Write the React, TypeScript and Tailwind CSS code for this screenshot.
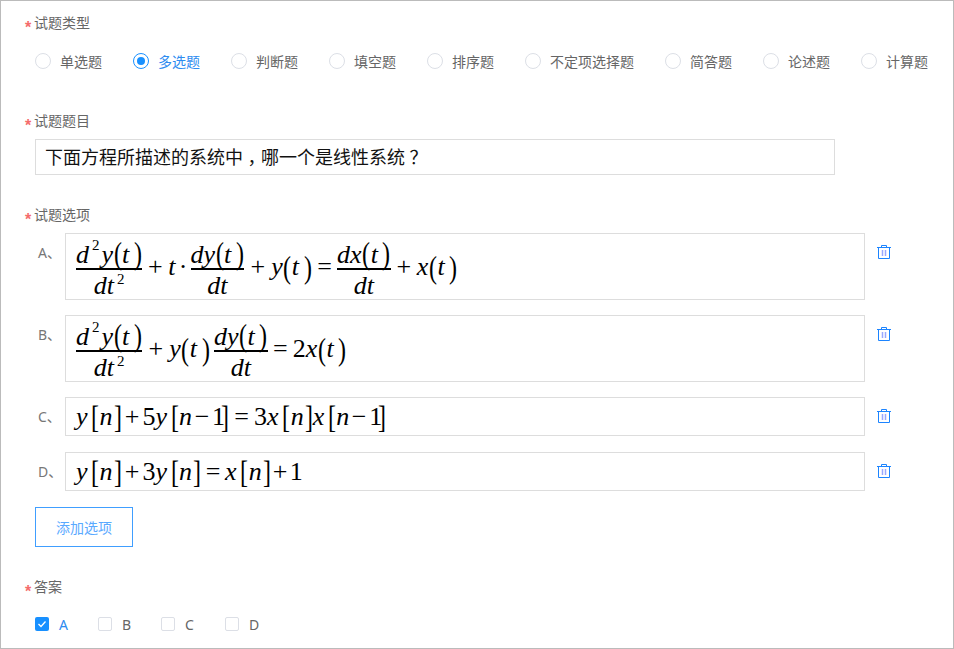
import type { ReactNode } from "react";

const types = ["单选题", "多选题", "判断题", "填空题", "排序题", "不定项选择题", "简答题", "论述题", "计算题"];

function Label({ children }: { children: ReactNode }) {
  return (
    <div className="flex h-5 items-center text-[14px] leading-5 text-[#666]">
      <span className="w-[9px] translate-y-[5px] font-['Liberation_Sans'] text-[16px] font-bold text-[#f56c6c]">*</span>
      <span>{children}</span>
    </div>
  );
}

function I({ children, className = "" }: { children: ReactNode; className?: string }) {
  return <span className={"italic " + className}>{children}</span>;
}

function Fence({ children }: { children: string }) {
  return (
    <span className="inline-flex w-[9px] justify-center">
      <span className="inline-block scale-x-[0.8] scale-y-[1.08] text-[30px] font-light leading-none">{children}</span>
    </span>
  );
}

function T() {
  return (
    <>
      <Fence>(</Fence>
      <I className="mr-[4px]">t</I>
      <Fence>)</Fence>
    </>
  );
}

function Frac({ top, bottom }: { top: ReactNode; bottom: ReactNode }) {
  return (
    <span className="inline-flex flex-col items-stretch">
      <span className="flex h-[34px] items-end justify-center whitespace-nowrap">{top}</span>
      <span className="h-[2px] bg-black" />
      <span className="flex h-[30px] items-center justify-center whitespace-nowrap pt-[2px]">{bottom}</span>
    </span>
  );
}

function Op({ children, w }: { children?: ReactNode; w: number }) {
  return (
    <span className="inline-flex justify-center" style={{ width: w }}>
      {children}
    </span>
  );
}

// half-width punctuation glyph centred in a full-width cell
function Punct({ children }: { children: string }) {
  return (
    <span className="inline-flex w-[18px] justify-center [font-feature-settings:'halt']">{children}</span>
  );
}

const D2Y = (
  <Frac
    top={
      <>
        <I>d</I>
        <span className="mb-[15px] ml-[3px] mr-[2px] text-[15px] leading-none">2</span>
        <I>y</I>
        <T />
      </>
    }
    bottom={
      <>
        <I>dt</I>
        <span className="mb-[12px] ml-[3px] text-[15px] leading-none">2</span>
      </>
    }
  />
);

const DYDT = (
  <Frac
    top={
      <>
        <I>dy</I>
        <T />
      </>
    }
    bottom={<I>dt</I>}
  />
);

const Yt = (
  <>
    <I>y</I>
    <T />
  </>
);

const Xt = (
  <>
    <I>x</I>
    <T />
  </>
);

function B({ children }: { children: ReactNode }) {
  return (
    <>
      <span className="ml-[3px] inline-flex w-[9px] justify-center">
        <span className="inline-block scale-x-[0.8] scale-y-[1.08] text-[30px] font-light leading-none">[</span>
      </span>
      {children}
      <span className="ml-[1px] inline-flex w-[8px] justify-center">
        <span className="inline-block scale-x-[0.8] scale-y-[1.08] text-[30px] font-light leading-none">]</span>
      </span>
    </>
  );
}

const NMinus1 = (
  <>
    <I>n</I>
    <Op w={20}>−</Op>
    <span className="-mr-[5px]">1</span>
  </>
);

const formulas: { key: string; tall: boolean; body: ReactNode }[] = [
  {
    key: "A",
    tall: true,
    body: (
      <>
        {D2Y}
        <Op w={26}>+</Op>
        <I>t</I>
        <Op w={15}>·</Op>
        {DYDT}
        <Op w={27}>+</Op>
        {Yt}
        <Op w={25}>=</Op>
        <Frac
          top={
            <>
              <I>dx</I>
              <T />
            </>
          }
          bottom={<I>dt</I>}
        />
        <Op w={26}>+</Op>
        {Xt}
      </>
    ),
  },
  {
    key: "B",
    tall: true,
    body: (
      <>
        {D2Y}
        <Op w={27}>+</Op>
        {Yt}
        <span className="w-[4px]" />
        {DYDT}
        <Op w={25}>=</Op>
        <span>2</span>
        {Xt}
      </>
    ),
  },
  {
    key: "C",
    tall: false,
    body: (
      <>
        <I>y</I>
        <B>
          <I>n</I>
        </B>
        <Op w={21}>+</Op>
        <span>5</span>
        <I>y</I>
        <B>{NMinus1}</B>
        <Op w={25}>=</Op>
        <span>3</span>
        <I>x</I>
        <B>
          <I>n</I>
        </B>
        <I>x</I>
        <B>{NMinus1}</B>
      </>
    ),
  },
  {
    key: "D",
    tall: false,
    body: (
      <>
        <I>y</I>
        <B>
          <I>n</I>
        </B>
        <Op w={21}>+</Op>
        <span>3</span>
        <I>y</I>
        <B>
          <I>n</I>
        </B>
        <Op w={24}>=</Op>
        <I>x</I>
        <B>
          <I>n</I>
        </B>
        <Op w={19}>+</Op>
        <span>1</span>
      </>
    ),
  },
];

function Trash() {
  return (
    <svg width="14" height="14" viewBox="0 0 14 14" fill="none" className="ml-[12px] mt-[12px] shrink-0">
      <path d="M0 2.5h14M4.5 2.5v-2h5v2M1.5 2.5v11h11v-11" stroke="#1c84ff" strokeWidth="1" />
      <path d="M5.5 5v6M8.5 5v6" stroke="#9aa8ff" strokeWidth="1.5" />
    </svg>
  );
}

export default function App() {
  return (
    <div className="box-border h-[649px] w-[954px] overflow-hidden border border-[#bbb] bg-white pl-[24px] pt-[12px] font-['Noto_Sans','Noto_Sans_CJK_SC',sans-serif]">
      <Label>试题类型</Label>

      <div className="ml-[10px] mt-[17px] flex h-[22px] items-center gap-[31px] text-[14px] text-[#666]">
        {types.map((t, i) => (
          <label key={t} className={"flex items-center gap-[9px] " + (i === 1 ? "text-[#2d8cf0]" : "")}>
            {i === 1 ? (
              <span className="flex h-4 w-4 items-center justify-center rounded-full border border-[#1890ff]">
                <span className="h-2 w-2 rounded-full bg-[#1890ff]" />
              </span>
            ) : (
              <span className="h-4 w-4 rounded-full border border-[#dcdfe6]" />
            )}
            {t}
          </label>
        ))}
      </div>

      <div className="mt-[39px]">
        <Label>试题题目</Label>
      </div>
      <div className="ml-[10px] mt-[8px] flex h-[36px] w-[800px] items-center border border-[#ddd] pl-[9px] text-[18px] text-[#111]">
        <span>下面方程所描述的系统中</span>
        <Punct>，</Punct>
        <span>哪一个是线性系统</span>
        <Punct>？</Punct>
      </div>

      <div className="mt-[30px]">
        <Label>试题选项</Label>
      </div>

      <div className="ml-[13px] mt-[8px] flex flex-col">
        {formulas.map((f, i) => (
          <div key={f.key} className={"flex items-start " + (i === 0 ? "" : i === 3 ? "mt-[16px]" : "mt-[15px]")}>
            <span className="mt-[10px] w-[27px] text-[14px] leading-5 text-[#777]">{f.key}、</span>
            <div
              className={
                "flex w-[800px] items-center border border-[#ddd] pl-[10px] font-['Liberation_Serif'] text-[26px] leading-none text-black " +
                (f.tall ? "h-[67px]" : "h-[39px]")
              }
            >
              {f.body}
            </div>
            <Trash />
          </div>
        ))}
      </div>

      <button className="ml-[10px] mt-[16px] block h-[40px] w-[98px] border border-[#409eff] text-[14px] text-[#5aa9ff]">
        添加选项
      </button>

      <div className="mt-[30px]">
        <Label>答案</Label>
      </div>

      <div className="ml-[10px] mt-[17px] flex h-[20px] items-center text-[14px] text-[#666]">
        <span className="flex w-[63px] items-center">
          <span className="flex h-[14px] w-[14px] items-center justify-center rounded-[2px] bg-[#1890ff]">
            <svg width="10" height="10" viewBox="0 0 10 10" fill="none">
              <path d="M1.5 5l2.5 2.5 4.5-5" stroke="#fff" strokeWidth="1.3" />
            </svg>
          </span>
          <span className="ml-[10px] text-[#2d8cf0]">A</span>
        </span>
        <span className="flex w-[63px] items-center">
          <span className="h-[14px] w-[14px] rounded-[2px] border border-[#dcdfe6]" />
          <span className="ml-[10px]">B</span>
        </span>
        <span className="flex w-[64px] items-center">
          <span className="h-[14px] w-[14px] rounded-[2px] border border-[#dcdfe6]" />
          <span className="ml-[10px]">C</span>
        </span>
        <span className="flex items-center">
          <span className="h-[14px] w-[14px] rounded-[2px] border border-[#dcdfe6]" />
          <span className="ml-[10px]">D</span>
        </span>
      </div>
    </div>
  );
}
